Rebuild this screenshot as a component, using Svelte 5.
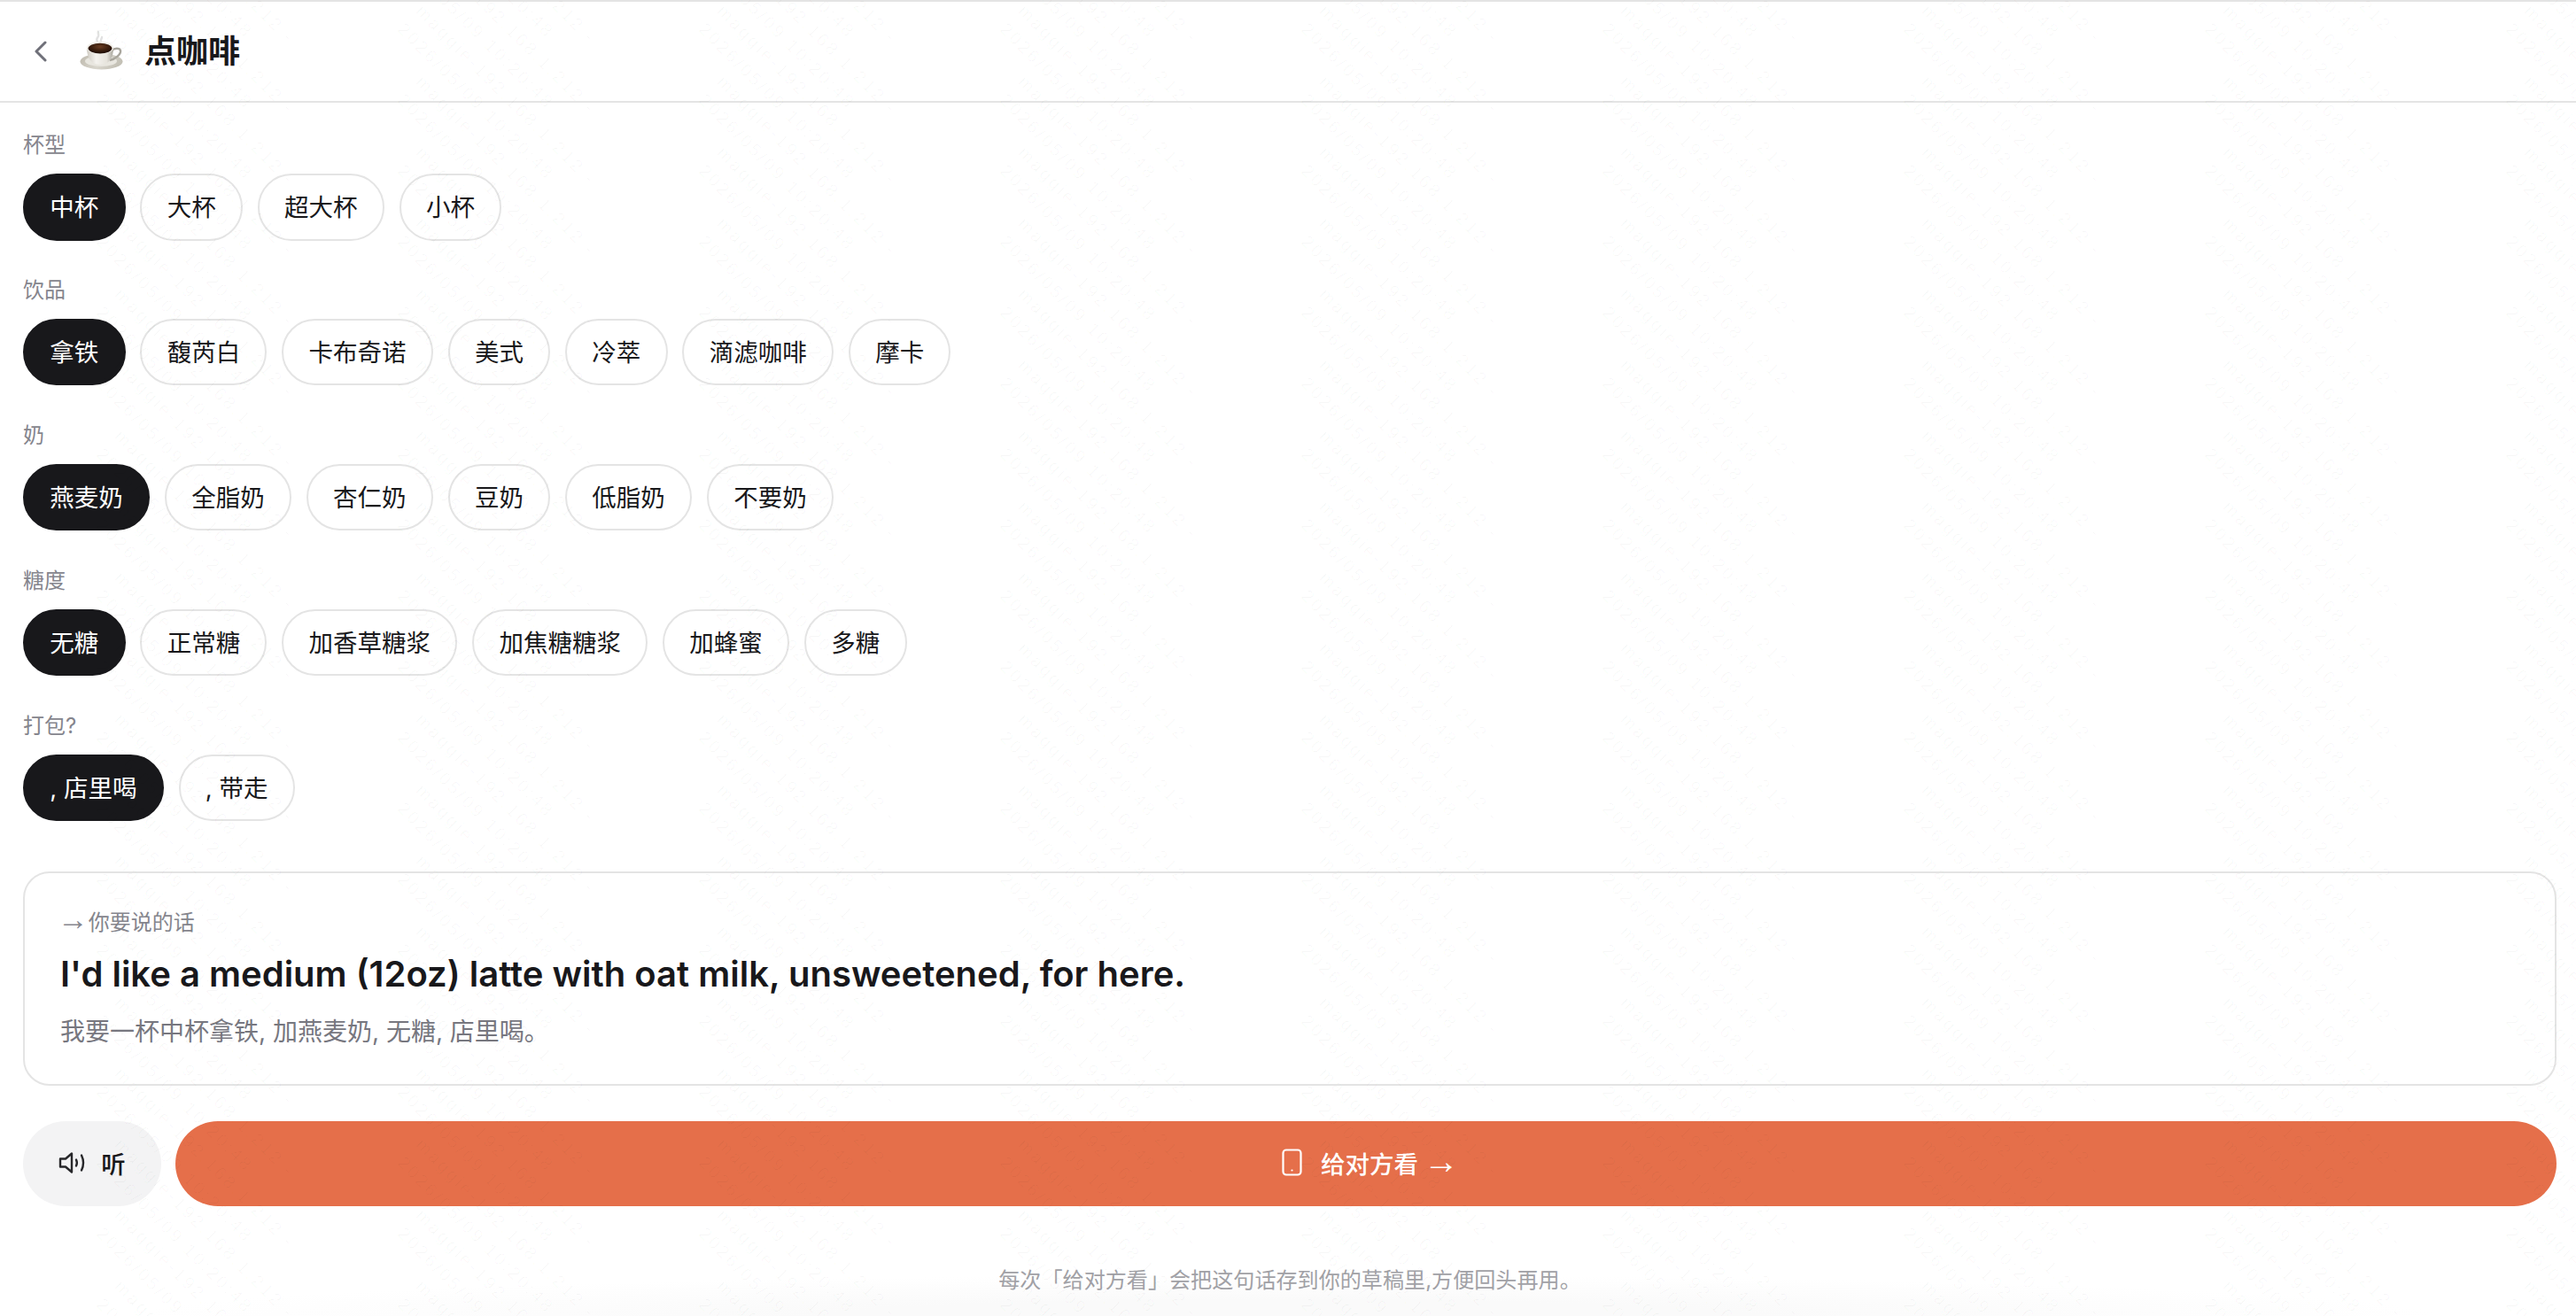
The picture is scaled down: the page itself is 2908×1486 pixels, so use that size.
<script>
  const groups = [
    { label: "杯型", options: ["中杯", "大杯", "超大杯", "小杯"] },
    { label: "饮品", options: ["拿铁", "馥芮白", "卡布奇诺", "美式", "冷萃", "滴滤咖啡", "摩卡"] },
    { label: "奶", options: ["燕麦奶", "全脂奶", "杏仁奶", "豆奶", "低脂奶", "不要奶"] },
    { label: "糖度", options: ["无糖", "正常糖", "加香草糖浆", "加焦糖糖浆", "加蜂蜜", "多糖"] },
    { label: "打包?", options: [", 店里喝", ", 带走"] }
  ];

  let picked = $state([0, 0, 0, 0, 0]);

  // watermark: same two lines every 340 x 80
  const marks = [];
  for (let row = 0; row < 24; row++) {
    for (let col = 0; col < 12; col++) {
      marks.push({ x: 143 + (col - 3) * 340, y: -241 + row * 80 });
    }
  }
</script>

<div class="page">
  <header class="topbar">
    <button class="back" aria-label="返回">
      <svg width="16" height="24" viewBox="0 0 16 24" fill="none" stroke="#6f7079" stroke-width="3" stroke-linecap="round" stroke-linejoin="round">
        <path d="M13 2 3 12l10 10" />
      </svg>
    </button>
    <svg class="cup" width="60" height="54" viewBox="0 0 60 54" role="img" aria-label="coffee">
      <defs>
        <linearGradient id="saucer" x1="0" y1="0" x2="1" y2="0.3">
          <stop offset="0" stop-color="#bdb8ac" />
          <stop offset="0.6" stop-color="#d9d6cd" />
          <stop offset="1" stop-color="#c4c1b6" />
        </linearGradient>
        <linearGradient id="body" x1="0" y1="0" x2="1" y2="0">
          <stop offset="0" stop-color="#cfcbc2" />
          <stop offset="0.35" stop-color="#f4f2ee" />
          <stop offset="0.75" stop-color="#e6e3dc" />
          <stop offset="1" stop-color="#a8a59c" />
        </linearGradient>
        <radialGradient id="coffee" cx="0.5" cy="0.35" r="0.7">
          <stop offset="0" stop-color="#6a3d22" />
          <stop offset="0.7" stop-color="#2c1509" />
          <stop offset="1" stop-color="#1a0c05" />
        </radialGradient>
      </defs>
      <path d="M25 16c-2-3 0-4 1-6s-1-3 0-5M29 16c-1-2 1-3 1-5" fill="none" stroke="#e2e2e2" stroke-width="2.4" stroke-linecap="round" />
      <ellipse cx="29.5" cy="38.5" rx="24" ry="9" fill="url(#saucer)" />
      <ellipse cx="29" cy="38" rx="18" ry="6" fill="#e8e6df" />
      <path d="M41 26c3-3 9-3 10 0 1 4-6 10-12 11" fill="none" stroke="#a9a69d" stroke-width="2.4" />
      <path d="M13 23c0 10 4 19 15 19s15-9 15-19z" fill="url(#body)" />
      <ellipse cx="28" cy="23" rx="15" ry="7.2" fill="#f1efea" />
      <ellipse cx="28" cy="23.6" rx="13.4" ry="5.8" fill="url(#coffee)" />
    </svg>
    <h1>点咖啡</h1>
  </header>

  <main class="content">
    {#each groups as group, g}
      <section class="group">
        <div class="group-label">{group.label}</div>
        <div class="chips">
          {#each group.options as option, i}
            <button class="chip" class:active={picked[g] === i} onclick={() => (picked[g] = i)}>{option}</button>
          {/each}
        </div>
      </section>
    {/each}

    <div class="card">
      <div class="card-tag"><span class="arrow">→</span>你要说的话</div>
      <div class="card-en">I'd like a medium (12oz) latte with oat milk, unsweetened, for here.</div>
      <div class="card-zh">我要一杯中杯拿铁, 加燕麦奶, 无糖, 店里喝。</div>
    </div>

    <div class="actions">
      <button class="listen">
        <svg width="32" height="26" viewBox="0 0 32 26" fill="none" stroke="#27272a" stroke-width="2.4" stroke-linecap="round" stroke-linejoin="round">
          <path d="M2 8.5h6L15 2.5v21l-7-6H2z" />
          <path d="M20 9.5c1 2 1 5 0 7" />
          <path d="M26 4.5c2.4 5 2.4 12 0 17" />
        </svg>
        <span>听</span>
      </button>
      <button class="show">
        <svg width="23" height="31" viewBox="0 0 23 31" fill="none" stroke="#fff" stroke-width="2.2" stroke-linecap="round">
          <rect x="1.5" y="1.5" width="20" height="28" rx="3.5" />
          <path d="M11.5 24.5h0.01" />
        </svg>
        <span class="show-text">给对方看<span class="arrow">→</span></span>
      </button>
    </div>

    <p class="note">每次「给对方看」会把这句话存到你的草稿里,方便回头再用。</p>
  </main>

  <div class="watermark" aria-hidden="true">
    {#each marks as m}
      <div class="mark" style="left: {m.x}px; top: {m.y}px">
        <div>maggie-192.168.1.212 -</div>
        <div>2026/05/09 10:20:48</div>
      </div>
    {/each}
  </div>
</div>

<style>
  :global(body) {
    margin: 0;
    background: #fff;
  }

  .page {
    position: relative;
    height: 1486px;
    overflow: hidden;
    box-sizing: border-box;
    font-family: Inter, "Noto Sans CJK SC", sans-serif;
    color: #18181b;
    background: radial-gradient(ellipse 1300px 46px at 50% 100%, #fafafa 40%, rgba(250, 250, 250, 0) 100%);
  }

  button {
    font-family: inherit;
    cursor: pointer;
  }

  .arrow {
    font-family: "Liberation Sans", sans-serif;
    font-size: 1.45em;
    font-weight: 400;
    line-height: 0;
  }

  .card-tag .arrow {
    margin-left: -3px;
  }

  .show-text {
    white-space: nowrap;
  }

  .show-text .arrow {
    margin-left: 6px;
  }

  .topbar {
    display: flex;
    align-items: center;
    height: 116px;
    box-sizing: border-box;
    border-top: 2px solid #e4e4e4;
    border-bottom: 2px solid #e4e4e4;
  }

  .back {
    display: flex;
    margin-left: 38px;
    padding: 0;
    border: none;
    background: none;
  }

  .cup {
    margin-left: 31px;
  }

  .topbar h1 {
    margin: 0 0 0 18px;
    font-size: 36px;
    font-weight: 700;
    line-height: 1;
  }

  .content {
    padding: 30px 22px 0 26px;
  }

  .group {
    margin-bottom: 38.3px;
  }

  .group:last-of-type {
    margin-bottom: 56.4px;
  }

  .group-label {
    height: 34px;
    margin-bottom: 16px;
    font-size: 24px;
    line-height: 36px;
    color: #85858d;
  }

  .chips {
    display: flex;
    gap: 16.8px;
  }

  .chip {
    height: 75.6px;
    padding: 0 28.3px 3px;
    box-sizing: border-box;
    border: 2px solid #e4e4e4;
    border-radius: 38px;
    background: none;
    color: #18181b;
    font-size: 27.5px;
  }

  .chip.active {
    border-color: #18181b;
    background: #18181b;
    color: #fff;
  }

  .card {
    height: 242px;
    box-sizing: border-box;
    padding: 39px 40px 0;
    border: 2px solid #e4e4e4;
    border-radius: 30px;
  }

  .card-tag {
    font-size: 24px;
    line-height: 34px;
    color: #85858d;
  }

  .card-en {
    margin-top: 14px;
    font-size: 40px;
    font-weight: 600;
    line-height: 54px;
  }

  .card-zh {
    margin-top: 18px;
    font-size: 28px;
    line-height: 40px;
    color: #77777f;
  }

  .actions {
    display: flex;
    gap: 16px;
    margin-top: 40px;
  }

  .listen,
  .show {
    display: flex;
    align-items: center;
    justify-content: center;
    height: 96px;
    padding: 0 0 2px;
    border: none;
    border-radius: 48px;
    font-size: 27.5px;
    font-weight: 500;
  }

  .listen {
    gap: 16px;
    width: 156px;
    background: #f3f3f4;
    color: #18181b;
  }

  .show {
    flex: 1;
    gap: 21px;
    padding-left: 10px;
    background: #e56f4a;
    color: #fff;
  }

  .note {
    margin: 67px 0 0;
    text-align: center;
    font-size: 24.1px;
    line-height: 34px;
    color: #a1a1a6;
  }

  .watermark {
    position: absolute;
    inset: 0;
    pointer-events: none;
  }

  .mark {
    position: absolute;
    transform: rotate(45deg);
    transform-origin: 0 0;
    font-family: "Liberation Sans", sans-serif;
    font-size: 20px;
    line-height: 29px;
    letter-spacing: 3px;
    white-space: nowrap;
    color: rgba(0, 0, 0, 0.028);
  }
</style>
